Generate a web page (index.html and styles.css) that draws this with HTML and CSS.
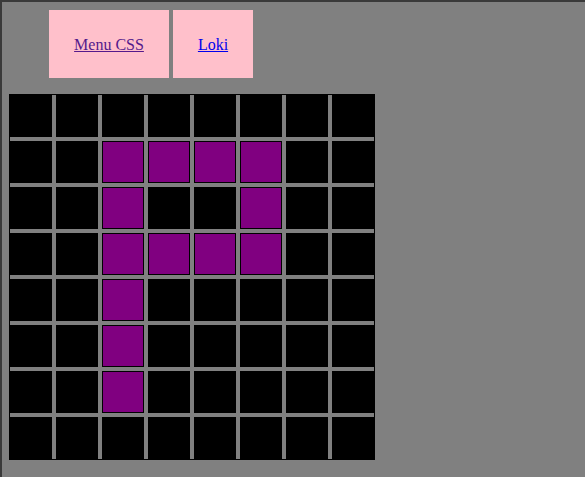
FILE: index.html
```html
<!DOCTYPE html>
<html>
<head>
<meta charset="utf-8">
<link rel="stylesheet" href="styles.css">
</head>
<body>
<div class="page">
  <nav class="menu">
    <a class="item item-wide visited" href="#">Menu CSS</a>
    <a class="item item-narrow" href="#">Loki</a>
  </nav>
  <div class="board">
    <div class="cell"></div><div class="cell"></div><div class="cell"></div><div class="cell"></div><div class="cell"></div><div class="cell"></div><div class="cell"></div><div class="cell"></div>
    <div class="cell"></div><div class="cell"></div><div class="cell on"></div><div class="cell on"></div><div class="cell on"></div><div class="cell on"></div><div class="cell"></div><div class="cell"></div>
    <div class="cell"></div><div class="cell"></div><div class="cell on"></div><div class="cell"></div><div class="cell"></div><div class="cell on"></div><div class="cell"></div><div class="cell"></div>
    <div class="cell"></div><div class="cell"></div><div class="cell on"></div><div class="cell on"></div><div class="cell on"></div><div class="cell on"></div><div class="cell"></div><div class="cell"></div>
    <div class="cell"></div><div class="cell"></div><div class="cell on"></div><div class="cell"></div><div class="cell"></div><div class="cell"></div><div class="cell"></div><div class="cell"></div>
    <div class="cell"></div><div class="cell"></div><div class="cell on"></div><div class="cell"></div><div class="cell"></div><div class="cell"></div><div class="cell"></div><div class="cell"></div>
    <div class="cell"></div><div class="cell"></div><div class="cell on"></div><div class="cell"></div><div class="cell"></div><div class="cell"></div><div class="cell"></div><div class="cell"></div>
    <div class="cell"></div><div class="cell"></div><div class="cell"></div><div class="cell"></div><div class="cell"></div><div class="cell"></div><div class="cell"></div><div class="cell"></div>
  </div>
</div>
</body>
</html>
```
FILE: styles.css
```css
html, body {
  margin: 0;
  padding: 0;
  background: #808080;
  height: 100%;
}
.page {
  box-sizing: border-box;
  min-height: 100%;
  border-top: 2px solid #3a3a3a;
  border-left: 2px solid #3a3a3a;
  padding: 8px 0 0 7px;
  font-family: "Liberation Serif", "Times New Roman", serif;
  font-size: 16px;
}
.menu {
  display: flex;
  gap: 4px;
  margin-left: 40px;
}
.item {
  display: flex;
  align-items: center;
  justify-content: center;
  height: 68px;
  background: #ffc0cb;
  color: #0000ee;
  text-decoration: underline;
  padding-top: 1px;
  box-sizing: border-box;
}
.item.visited {
  color: #551a8b;
}
.item-wide { width: 120px; }
.item-narrow { width: 80px; }
.board {
  margin-top: 16px;
  display: grid;
  grid-template-columns: repeat(8, 42px);
  grid-auto-rows: 42px;
  gap: 4px;
  width: max-content;
  border: 1px solid #000;
}
.cell {
  box-sizing: border-box;
  border: 1px solid #000;
  background: #000;
}
.cell.on {
  background: #800080;
}
```
